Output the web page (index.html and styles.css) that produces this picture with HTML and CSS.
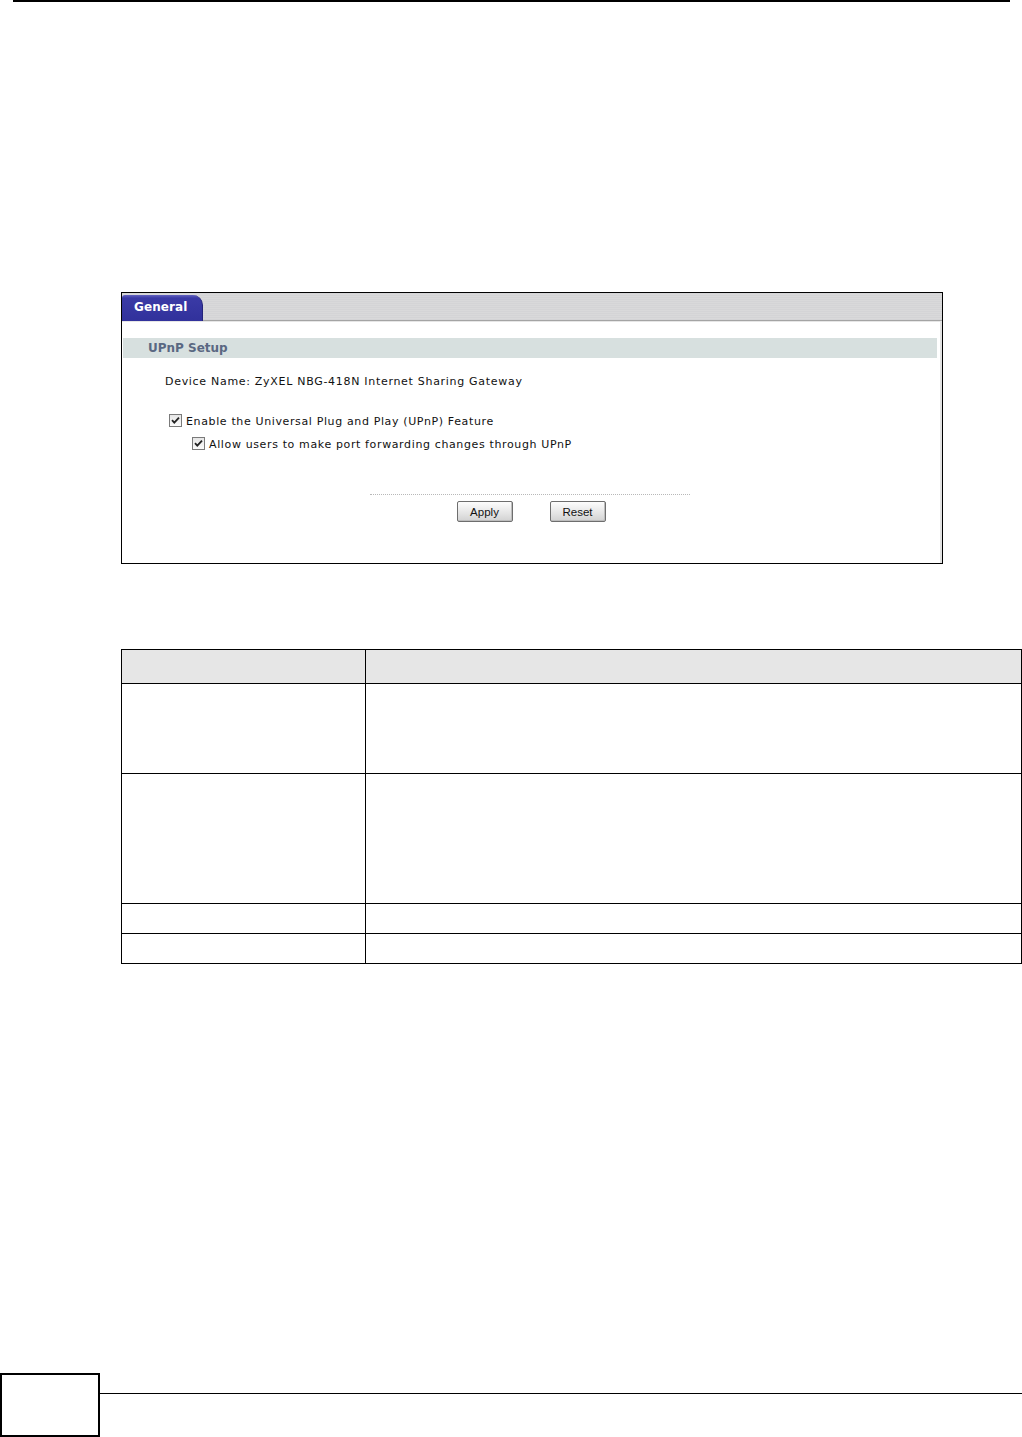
FILE: index.html
```html
<!DOCTYPE html>
<html>
<head lang="en">
    <meta charset="UTF-8">
    <title>UPnP General</title>
    <link rel="stylesheet" href="styles.css">
</head>
<body>
    <div id="page">
        <div class="top-rule"></div>

        <div id="shot">
            <div class="tabbar">
                <div class="tab">General</div>
            </div>
            <div class="panel">
                <div class="section-title">UPnP Setup</div>
                <div class="device">Device Name: ZyXEL NBG-418N Internet Sharing Gateway</div>
                <div class="check lvl1">
                    <span class="box"><svg width="13" height="13" viewBox="0 0 13 13"><path d="M3 6.2 L5.3 8.6 L10 3.6" fill="none" stroke="#222" stroke-width="1.8"/></svg></span>
                    <span>Enable the Universal Plug and Play (UPnP) Feature</span>
                </div>
                <div class="check lvl2">
                    <span class="box"><svg width="13" height="13" viewBox="0 0 13 13"><path d="M3 6.2 L5.3 8.6 L10 3.6" fill="none" stroke="#222" stroke-width="1.8"/></svg></span>
                    <span>Allow users to make port forwarding changes through UPnP</span>
                </div>
                <div class="actions">
                    <div class="dots"></div>
                    <div class="buttons">
                        <span class="btn">Apply</span>
                        <span class="btn">Reset</span>
                    </div>
                </div>
            </div>
        </div>

        <table id="desc">
            <tr class="head"><td class="c1"></td><td></td></tr>
            <tr class="r1"><td class="c1"></td><td></td></tr>
            <tr class="r2"><td class="c1"></td><td></td></tr>
            <tr class="r3"><td class="c1"></td><td></td></tr>
            <tr class="r3"><td class="c1"></td><td></td></tr>
        </table>

        <div id="foot">
            <div class="pagebox"></div>
            <div class="foot-rule"></div>
        </div>
    </div>
</body>
</html>
```

FILE: styles.css
```css
*{
    margin: 0;
    padding: 0;
    box-sizing: border-box;
}
body{
    background: #fff;
    font-family: "DejaVu Sans", Verdana, sans-serif;
}
#page{
    height: 1437px;
    display: flex;
    flex-direction: column;
}
.top-rule{
    height: 2px;
    margin: 0 12px 0 13px;
    background: #000;
}

/* screenshot box */
#shot{
    width: 822px;
    height: 272px;
    margin: 290px 0 0 121px;
    border: 1px solid #000;
    display: flex;
    flex-direction: column;
}
.tabbar{
    height: 28px;
    background: repeating-linear-gradient(#d4d4d6 0, #d4d4d6 1px, #d9d9da 1px, #d9d9da 2px);
    border-bottom: 1px solid #a4a4a4;
    box-shadow: 0 1px 0 #e6e6e6;
    display: flex;
    align-items: flex-end;
}
.tab{
    width: 81px;
    height: 26px;
    margin-bottom: -1px;
    padding-left: 12px;
    line-height: 25px;
    color: #fff;
    font-size: 12px;
    font-weight: bold;
    letter-spacing: 0.1px;
    background: linear-gradient(#6262c0 0, #3a3aa6 3px, #31319b 100%);
    border-radius: 3px 10px 0 0;
    border-right: 1px solid #24247a;
}
.panel{
    flex: 1;
    padding: 17px 3px 0 1px;
    border-right: 2px solid #e2e2e2;
}
.section-title{
    height: 20px;
    line-height: 21px;
    padding-left: 25px;
    background: #d7e0df;
    color: #5a6882;
    font-size: 12px;
    font-weight: bold;
}
.device{
    margin: 17px 0 0 42px;
    font-size: 11px;
    line-height: 14px;
    letter-spacing: 0.7px;
    color: #111;
}
.check{
    display: flex;
    align-items: center;
    gap: 4px;
    height: 16px;
    font-size: 11px;
    letter-spacing: 0.63px;
    color: #111;
}
.check.lvl1{
    margin: 23px 0 0 46px;
}
.check.lvl2{
    margin: 7px 0 0 69px;
}
.check span:last-child{
    margin-top: 3px;
}
.box{
    width: 13px;
    height: 13px;
    border: 1px solid #7a7a7a;
    background: linear-gradient(#e6e6e6, #fbfbfb);
    display: flex;
    align-items: center;
    justify-content: center;
}
.box svg{
    display: block;
    margin: -1px;
}
.actions{
    margin-top: 43px;
    display: flex;
    flex-direction: column;
    align-items: center;
}
.dots{
    width: 320px;
    border-top: 1px dotted #b8b8b8;
}
.buttons{
    display: flex;
    gap: 37px;
    margin-top: 6px;
    padding-left: 2px;
}
.btn{
    width: 56px;
    height: 21px;
    border: 1px solid #6e6e6e;
    border-radius: 2px;
    background: linear-gradient(#fdfdfd, #e4e4e4 60%, #d2d2d2);
    box-shadow: inset -1px -1px 0 #bdbdbd;
    font-family: "Liberation Sans", Arial, sans-serif;
    font-size: 11.5px;
    line-height: 20px;
    text-align: center;
    color: #111;
}

/* description table */
#desc{
    width: 901px;
    margin: 85px 0 0 121px;
    border-collapse: collapse;
}
#desc td{
    border: 1px solid #000;
}
#desc .c1{
    width: 244px;
}
#desc tr.head td{
    height: 34px;
    background: #e6e6e6;
}
#desc tr.r1 td{
    height: 90px;
}
#desc tr.r2 td{
    height: 130px;
}
#desc tr.r3 td{
    height: 30px;
}

/* page footer */
#foot{
    margin-top: auto;
    display: flex;
    align-items: flex-start;
}
.pagebox{
    width: 100px;
    height: 64px;
    border: 2px solid #000;
}
.foot-rule{
    flex: 1;
    height: 1px;
    margin-top: 20px;
    background: #000;
}
```
